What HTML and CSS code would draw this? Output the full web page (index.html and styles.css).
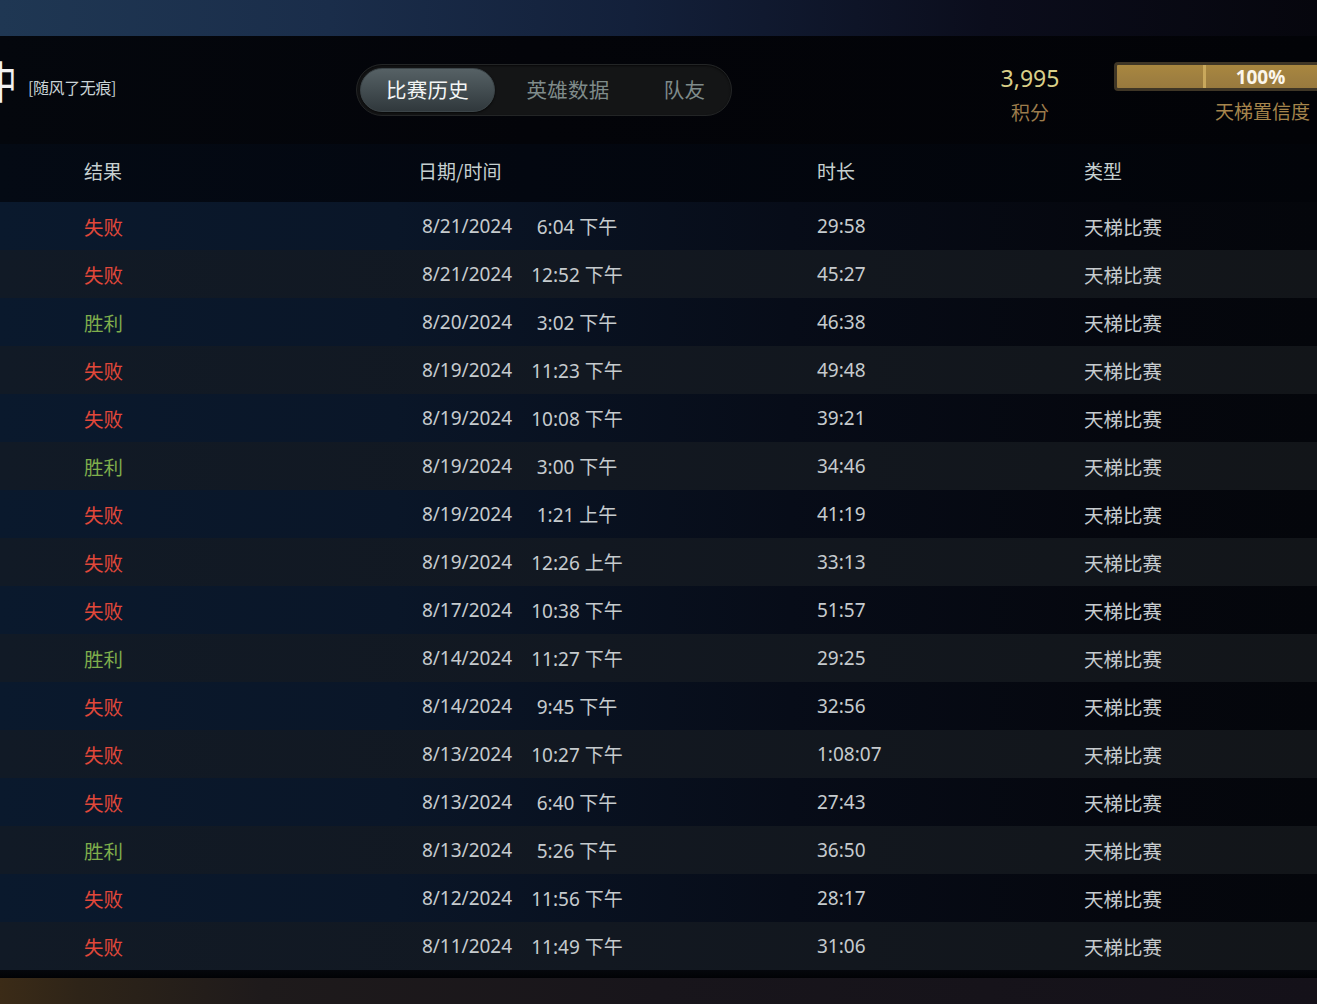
FILE: index.html
```html
<!DOCTYPE html>
<html lang="zh-CN">
<head>
<meta charset="utf-8">
<title>比赛历史</title>
<link rel="stylesheet" href="styles.css">
</head>
<body>
<div class="page">
  <div class="topbar"></div>
  <header class="header">
    <div class="player">
      <div class="bigname-clip"><span class="bigname">中</span></div>
      <span class="tag">[随风了无痕]</span>
    </div>
    <nav class="tabs">
      <div class="tab tab-active">比赛历史</div>
      <div class="tab tab-hero">英雄数据</div>
      <div class="tab tab-mates">队友</div>
    </nav>
    <div class="spacer"></div>
    <div class="score">
      <div class="score-num">3,995</div>
      <div class="score-label">积分</div>
    </div>
    <div class="confidence">
      <div class="bar">
        <div class="bar-left"></div>
        <div class="bar-right">100%</div>
      </div>
      <div class="conf-label">天梯置信度</div>
    </div>
  </header>

  <section class="table">
    <div class="thead">
      <div class="h-res">结果</div>
      <div class="h-dt">日期/时间</div>
      <div class="h-dur">时长</div>
      <div class="h-type">类型</div>
    </div>
    <div class="rows">
      <div class="row"><div class="res lose">失败</div><div class="date">8/21/2024</div><div class="time">6:04 下午</div><div class="gap"></div><div class="dur">29:58</div><div class="type">天梯比赛</div></div>
      <div class="row"><div class="res lose">失败</div><div class="date">8/21/2024</div><div class="time">12:52 下午</div><div class="gap"></div><div class="dur">45:27</div><div class="type">天梯比赛</div></div>
      <div class="row"><div class="res win">胜利</div><div class="date">8/20/2024</div><div class="time">3:02 下午</div><div class="gap"></div><div class="dur">46:38</div><div class="type">天梯比赛</div></div>
      <div class="row"><div class="res lose">失败</div><div class="date">8/19/2024</div><div class="time">11:23 下午</div><div class="gap"></div><div class="dur">49:48</div><div class="type">天梯比赛</div></div>
      <div class="row"><div class="res lose">失败</div><div class="date">8/19/2024</div><div class="time">10:08 下午</div><div class="gap"></div><div class="dur">39:21</div><div class="type">天梯比赛</div></div>
      <div class="row"><div class="res win">胜利</div><div class="date">8/19/2024</div><div class="time">3:00 下午</div><div class="gap"></div><div class="dur">34:46</div><div class="type">天梯比赛</div></div>
      <div class="row"><div class="res lose">失败</div><div class="date">8/19/2024</div><div class="time">1:21 上午</div><div class="gap"></div><div class="dur">41:19</div><div class="type">天梯比赛</div></div>
      <div class="row"><div class="res lose">失败</div><div class="date">8/19/2024</div><div class="time">12:26 上午</div><div class="gap"></div><div class="dur">33:13</div><div class="type">天梯比赛</div></div>
      <div class="row"><div class="res lose">失败</div><div class="date">8/17/2024</div><div class="time">10:38 下午</div><div class="gap"></div><div class="dur">51:57</div><div class="type">天梯比赛</div></div>
      <div class="row"><div class="res win">胜利</div><div class="date">8/14/2024</div><div class="time">11:27 下午</div><div class="gap"></div><div class="dur">29:25</div><div class="type">天梯比赛</div></div>
      <div class="row"><div class="res lose">失败</div><div class="date">8/14/2024</div><div class="time">9:45 下午</div><div class="gap"></div><div class="dur">32:56</div><div class="type">天梯比赛</div></div>
      <div class="row"><div class="res lose">失败</div><div class="date">8/13/2024</div><div class="time">10:27 下午</div><div class="gap"></div><div class="dur">1:08:07</div><div class="type">天梯比赛</div></div>
      <div class="row"><div class="res lose">失败</div><div class="date">8/13/2024</div><div class="time">6:40 下午</div><div class="gap"></div><div class="dur">27:43</div><div class="type">天梯比赛</div></div>
      <div class="row"><div class="res win">胜利</div><div class="date">8/13/2024</div><div class="time">5:26 下午</div><div class="gap"></div><div class="dur">36:50</div><div class="type">天梯比赛</div></div>
      <div class="row"><div class="res lose">失败</div><div class="date">8/12/2024</div><div class="time">11:56 下午</div><div class="gap"></div><div class="dur">28:17</div><div class="type">天梯比赛</div></div>
      <div class="row"><div class="res lose">失败</div><div class="date">8/11/2024</div><div class="time">11:49 下午</div><div class="gap"></div><div class="dur">31:06</div><div class="type">天梯比赛</div></div>
    </div>
  </section>
  <div class="shadow-strip"></div>
  <div class="footer-art"></div>
</div>
</body>
</html>
```

FILE: styles.css
```css
* { box-sizing: border-box; }

html, body {
  margin: 0;
  padding: 0;
  background: #05070c;
  overflow: hidden;
}

body {
  font-family: "Noto Sans", "Noto Sans CJK SC", sans-serif;
  color: #c4c9cc;
}

.page {
  width: 1317px;
  height: 1004px;
  overflow: hidden;
  display: flex;
  flex-direction: column;
}

.topbar {
  height: 36px;
  flex: none;
  background: linear-gradient(90deg, #1f3753 0%, #1a2d4a 25%, #13203a 48%, #0b0d1c 75%, #06060d 100%);
}

/* ---------- header ---------- */
.header {
  height: 108px;
  flex: none;
  display: grid;
  grid-template-columns: 356px 376px 1fr 80px 247px;
  align-items: center;
  background: linear-gradient(90deg, #04070d 0%, #030409 40%, #020307 100%);
}

.player {
  display: flex;
  align-items: center;
  gap: 13px;
  margin-top: -6px;
}

.bigname-clip {
  width: 15px;
  height: 48px;
  margin-bottom: 14px;
  overflow: hidden;
  display: flex;
  align-items: center;
}

.bigname {
  display: block;
  font-family: "Noto Sans CJK SC", sans-serif;
  font-size: 44px;
  color: #f2f2f2;
  line-height: 1;
  margin-left: -15px;
  transform: scaleX(0.72);
  transform-origin: left center;
}

.tag {
  font-family: "Noto Sans CJK SC", sans-serif;
  font-size: 16px;
  color: #c9d3d6;
  letter-spacing: -0.4px;
}

.tabs {
  height: 52px;
  display: flex;
  align-items: center;
  padding: 3px;
  border-radius: 26px;
  background: #141516;
  border: 1px solid #232526;
  box-shadow: inset 0 1px 2px rgba(0,0,0,0.6);
}

.tab {
  height: 44px;
  display: flex;
  align-items: center;
  justify-content: center;
  font-family: "Noto Sans CJK SC", sans-serif;
  font-size: 20.5px;
  color: #7f8b8a;
  letter-spacing: 0.3px;
  padding-bottom: 2px;
}

.tab-active {
  width: 135px;
  border-radius: 22px;
  color: #f4f6f6;
  background: linear-gradient(180deg, #566165 0%, #434d51 50%, #30383c 100%);
  border: 1px solid #3c4549;
  box-shadow: 0 1px 2px rgba(0,0,0,0.7);
}

.tab-hero { width: 146px; }
.tab-mates { width: 87px; }

.score {
  display: flex;
  flex-direction: column;
  align-items: center;
  gap: 6px;
  margin-top: 8px;
}

.score-num {
  font-size: 23px;
  color: #d9cf88;
  line-height: 30px;
}

.score-label {
  font-family: "Noto Sans CJK SC", sans-serif;
  font-size: 19px;
  color: #9c7c4c;
  line-height: 26px;
}

.confidence {
  display: flex;
  flex-direction: column;
  align-items: flex-end;
  gap: 7px;
  padding-left: 44px;
  margin-top: 6px;
}

.bar {
  align-self: flex-start;
  width: 212px;
  height: 29px;
  display: flex;
  flex: none;
  border: 3px solid #3f3626;
  border-radius: 4px;
  background: linear-gradient(180deg, #a9873f 0%, #a08040 50%, #997a3e 100%);
}

.bar-left {
  width: 89px;
  border-right: 3px solid #c9a85c;
}

.bar-right {
  flex: 1;
  display: flex;
  align-items: center;
  justify-content: center;
  font-family: "Open Sans", "Noto Sans", sans-serif;
  font-weight: 700;
  font-size: 19px;
  color: #fbf6ec;
  padding-right: 8px;
}

.conf-label {
  font-family: "Noto Sans CJK SC", sans-serif;
  font-size: 19px;
  color: #a6854c;
  line-height: 26px;
  padding-right: 7px;
}

/* ---------- table ---------- */
.table {
  flex: none;
  height: 826px;
  display: flex;
  flex-direction: column;
  background: linear-gradient(90deg, #0a192d 0%, #0a1628 30%, #070c18 60%, #05070e 85%, #04060b 100%);
}

.thead {
  height: 58px;
  flex: none;
  display: grid;
  grid-template-columns: 334px 399px 267px 1fr;
  align-items: center;
  padding-left: 84px;
  padding-bottom: 5px;
  font-family: "Noto Sans CJK SC", sans-serif;
  font-size: 19px;
  color: #c6d0d0;
  background: linear-gradient(90deg, #040a14 0%, #030710 40%, #020409 100%);
}

.rows {
  display: flex;
  flex-direction: column;
}

.row {
  height: 48px;
  display: grid;
  grid-template-columns: 334px 98px 122px 179px 267px 1fr;
  align-items: center;
  padding-left: 84px;
  font-size: 19px;
  color: #c6cbce;
}

.row:nth-child(even) {
  background: linear-gradient(90deg, #111a26 0%, #121821 45%, #121519 100%);
}

.res, .type {
  font-family: "Noto Sans CJK SC", sans-serif;
  font-size: 19.5px;
}

.lose { color: #e2483a; }
.win { color: #7fae4c; }

.date { text-align: center; }
.time { text-align: center; white-space: nowrap; }

.shadow-strip {
  height: 8px;
  flex: none;
  background: linear-gradient(180deg, #05070c 0%, #010205 100%);
}

.footer-art {
  flex: 1;
  background: linear-gradient(90deg, #3b2b17 0%, #2e2418 6%, #1e1a1b 20%, #18151b 50%, #141119 100%);
}
```
